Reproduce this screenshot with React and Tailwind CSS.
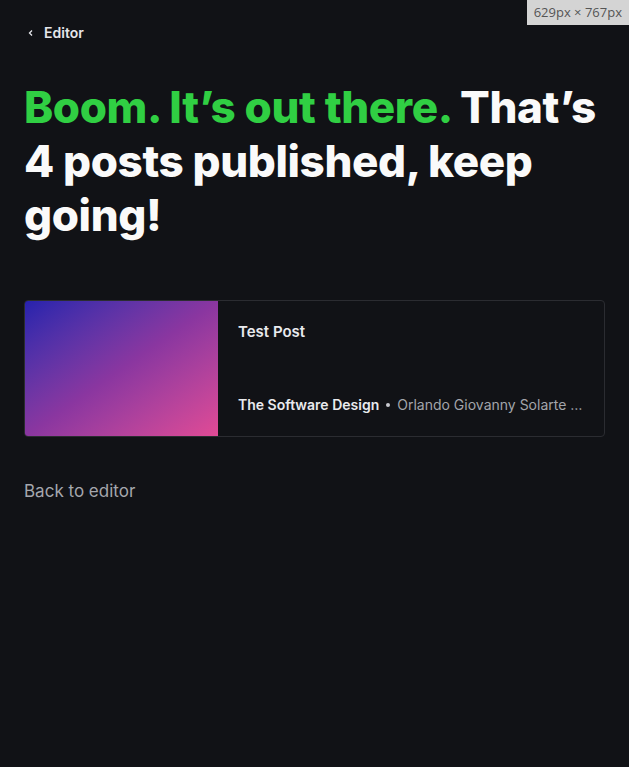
import React from 'react';

const App = () => {
  return (
    <div className="relative min-h-[767px] bg-[#111216] px-6 text-white" style={{ fontFamily: 'Inter, "Noto Sans", sans-serif' }}>
      {/* devtools size badge */}
      <div className="absolute right-0 top-0 bg-[#d4d4d4] px-[7px] py-[4px] text-[13px] leading-[17px] text-[#555]" style={{ fontFamily: '"Open Sans", sans-serif' }}>
        629px × 767px
      </div>

      <div className="flex items-center gap-[8px] pt-[22px] text-[14px] font-semibold text-[#e5e6ea]">
        <svg width="10" height="10" viewBox="0 0 10 10" fill="none" stroke="#e5e6ea" strokeWidth="1.3" className="ml-[2px]">
          <path d="M6 2.5 3.5 5 6 7.5" />
        </svg>
        <span>Editor</span>
      </div>

      <h1 className="mt-[37px] text-[44px] font-extrabold leading-[54px] tracking-[-0.4px] text-[#fafafa]">
        <span className="text-[#30cf43]">Boom. It’s out there.</span> That’s 4 posts published, keep going!
      </h1>

      <div className="mt-[58px] flex h-[137px] overflow-hidden rounded-[4px] border border-[#2b2c31]">
        <div className="w-[193px] shrink-0 bg-gradient-to-br from-[#2721ad] via-[#8a36a0] to-[#e14a95]" />
        <div className="flex min-w-0 flex-1 flex-col justify-between px-5 pb-[21px] pt-[20px]">
          <div className="text-[15px] font-semibold text-[#e9eaee]">Test Post</div>
          <div className="flex min-w-0 items-center text-[14px]">
            <span className="shrink-0 font-semibold text-[#e9eaee]">The Software Design</span>
            <span className="mx-[7px] h-[4px] w-[4px] shrink-0 rounded-full bg-[#c9cad0]" />
            <span className="truncate text-[#a3a5ab]">Orlando Giovanny Solarte Delgado</span>
          </div>
        </div>
      </div>

      <div className="mt-[42px] text-[17px] text-[#a5a7ad]">Back to editor</div>
    </div>
  );
};

export default App;
